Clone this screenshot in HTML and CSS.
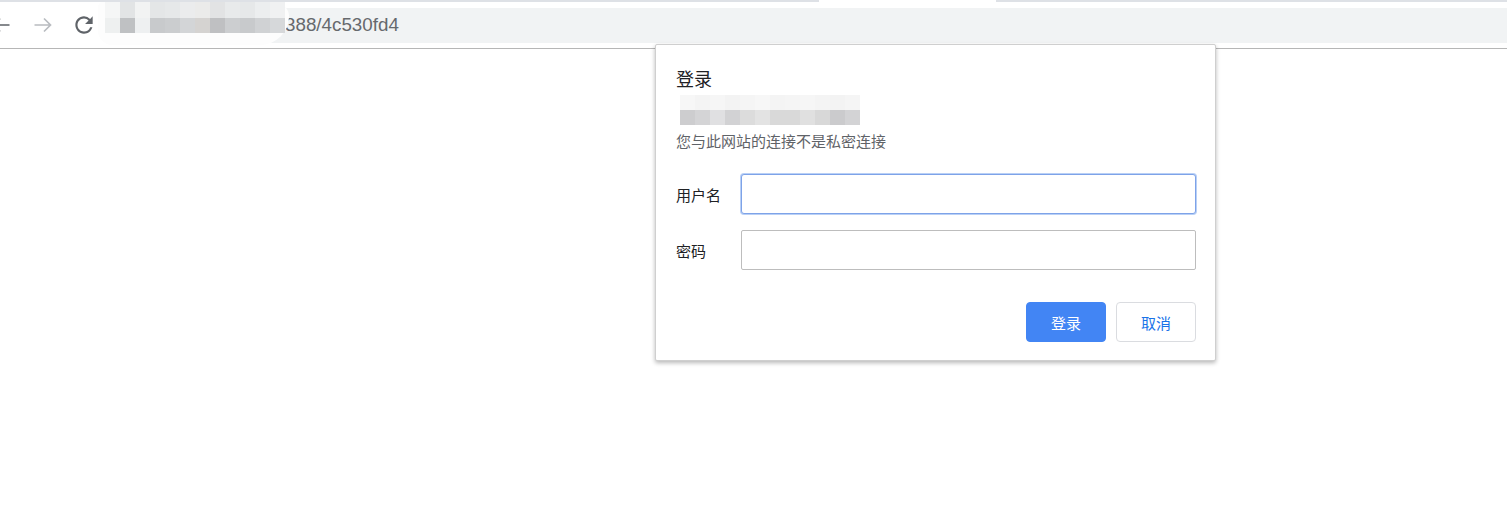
FILE: index.html
```html
<!DOCTYPE html>
<html>
<head>
  <title>登录</title>
  <link rel="stylesheet" href="styles.css">
</head>
<body>
  <div class="tabstrip">
    <div class="tab-line"></div>
    <div class="tab-gap"></div>
    <div class="tab-line grow"></div>
  </div>

  <div class="toolbar">
    <svg class="nav-icon back" viewBox="0 0 24 24"><path d="M20.5 12H4.5M11 5.5l-6.5 6.5 6.5 6.5"/></svg>
    <svg class="nav-icon forward" viewBox="0 0 24 24"><path d="M3.5 12h16M13 5.5l6.5 6.5-6.5 6.5"/></svg>
    <svg class="nav-icon reload" viewBox="0 0 24 24"><path class="fill" d="M17.65 6.35A7.958 7.958 0 0 0 12 4c-4.42 0-7.99 3.58-7.99 8s3.57 8 7.99 8c3.73 0 6.84-2.55 7.73-6h-2.08A5.99 5.99 0 0 1 12 18c-3.310 0-6-2.690-6-6s2.690-6 6-6c1.660 0 3.140.690 4.220 1.780L13 11h7V4l-2.350 2.350z"/></svg>
    <div class="omnibox">
      <span class="url">388/4c530fd4</span>
    </div>
    <div class="mosaic url-mosaic">
      <div class="mosaic-row top">
        <i style="background:#f5f6f6"></i><i style="background:#e2e4e5"></i><i style="background:#f2f3f3"></i><i style="background:#e4e6e7"></i><i style="background:#e6e8e9"></i><i style="background:#ebeced"></i><i style="background:#ebebea"></i><i style="background:#e2e3e4"></i><i style="background:#e8eaeb"></i><i style="background:#e6e8e9"></i><i style="background:#eceeef"></i><i style="background:#f0f1f2"></i>
      </div>
      <div class="mosaic-row">
        <i style="background:#eef0f0"></i><i style="background:#bfc1c3"></i><i style="background:#eef0f1"></i><i style="background:#c8cacc"></i><i style="background:#cbcdcf"></i><i style="background:#d3d5d7"></i><i style="background:#d5d3d1"></i><i style="background:#bfc0c2"></i><i style="background:#ccced0"></i><i style="background:#c8cacc"></i><i style="background:#d0d2d4"></i><i style="background:#d6d8da"></i>
      </div>
    </div>
  </div>

  <div class="dialog">
    <div class="dialog-title">登录</div>
    <div class="host">
      <div class="mosaic">
        <div class="mosaic-row top">
          <i style="background:#f7f7f7"></i><i style="background:#f4f4f4"></i><i style="background:#f6f6f6"></i><i style="background:#f3f3f3"></i><i style="background:#f5f5f5"></i><i style="background:#f7f7f7"></i><i style="background:#f4f4f4"></i><i style="background:#f5f5f5"></i><i style="background:#f6f6f6"></i><i style="background:#f4f4f4"></i><i style="background:#f3f3f3"></i><i style="background:#f5f5f5"></i>
        </div>
        <div class="mosaic-row">
          <i style="background:#cdcdcf"></i><i style="background:#d4d4d6"></i><i style="background:#e0e0e2"></i><i style="background:#d2d2d4"></i><i style="background:#dcdcdc"></i><i style="background:#e3e3e3"></i><i style="background:#d9d9d9"></i><i style="background:#d9d9d9"></i><i style="background:#e0e0e0"></i><i style="background:#d8d8d8"></i><i style="background:#cbcbcd"></i><i style="background:#d3d3d5"></i>
        </div>
      </div>
    </div>
    <div class="dialog-note">您与此网站的连接不是私密连接</div>

    <form class="login-form">
      <div class="form-row">
        <label class="form-label" for="username">用户名</label>
        <input type="text" id="username" class="input-field focused">
      </div>
      <div class="form-row">
        <label class="form-label" for="password">密码</label>
        <input type="password" id="password" class="input-field">
      </div>
      <div class="form-actions">
        <button type="button" class="button primary">登录</button>
        <button type="button" class="button">取消</button>
      </div>
    </form>
  </div>
</body>
</html>
```

FILE: styles.css
```css
html, body {
  margin: 0;
  padding: 0;
  height: 100%;
}

body {
  position: relative;
  background-color: #fff;
  font-family: "Noto Sans CJK SC", "Liberation Sans", sans-serif;
  overflow: hidden;
}

.tabstrip {
  display: flex;
  height: 2px;
}

.tab-line {
  width: 819px;
  background-color: #dee1e6;
}

.tab-line.grow {
  flex: 1;
}

.tab-gap {
  width: 177px;
  background-color: #fff;
}

.toolbar {
  position: relative;
  display: flex;
  align-items: center;
  height: 46px;
  border-bottom: 1px solid #b6b6b6;
}

.nav-icon {
  width: 24px;
  height: 24px;
  flex-shrink: 0;
  fill: none;
  stroke: #5f6368;
  stroke-width: 1.7;
}

.nav-icon .fill {
  fill: #5f6368;
  stroke: none;
}

.back {
  margin-left: -11px;
}

.forward {
  margin-left: 18px;
  stroke: #b9bcc0;
}

.reload {
  margin-left: 16px;
  width: 26px;
  height: 26px;
}

.omnibox {
  flex: 1;
  height: 35px;
  margin-left: 11px;
  padding-left: 177px;
  display: flex;
  align-items: center;
  background-color: #f1f3f4;
  border-radius: 18px 0 0 18px;
}

.url {
  font-family: "Liberation Sans", sans-serif;
  font-size: 18.8px;
  color: #66696d;
}

.mosaic {
  display: flex;
  flex-direction: column;
}

.url-mosaic {
  position: absolute;
  left: 98px;
  top: 0;
  padding: 0 4px 12px 7px;
  background-color: #fdfdfd;
  border-radius: 10px 30px 60px 30px;
}

.mosaic-row {
  display: flex;
}

.mosaic-row i {
  width: 15px;
  height: 15px;
}

.url-mosaic .mosaic-row.top i {
  height: 16px;
}

.dialog {
  position: absolute;
  left: 655px;
  top: 44px;
  width: 561px;
  box-sizing: border-box;
  padding: 20px 19px 18px 20px;
  background-color: #fff;
  border: 1px solid #cfcfcf;
  border-radius: 2px;
  box-shadow: 0 2px 4px rgba(0, 0, 0, 0.28);
}

.dialog-title {
  font-size: 18px;
  line-height: 26px;
  color: #202124;
}

.host {
  height: 40px;
  padding: 4px 0 0 4px;
  box-sizing: border-box;
}

.dialog-note {
  font-size: 15px;
  line-height: 20px;
  color: #5f6368;
}

.login-form {
  margin: 23px 0 0 0;
}

.form-row {
  display: flex;
  align-items: center;
  margin-bottom: 16px;
}

.form-label {
  width: 65px;
  font-size: 15px;
  color: #202124;
}

.input-field {
  width: 455px;
  height: 40px;
  box-sizing: border-box;
  margin: 0;
  padding: 0 8px;
  border: 1px solid #bdbdbd;
  border-radius: 2px;
  font-size: 15px;
  outline: none;
}

.input-field.focused {
  border-color: #7ea3e8;
  border-radius: 3px;
  box-shadow: 0 0 0 1px #b9d0f6;
}

.form-actions {
  display: flex;
  justify-content: flex-end;
  gap: 10px;
  margin-top: 32px;
}

.button {
  width: 80px;
  height: 40px;
  padding: 0;
  background-color: #fff;
  color: #1a73e8;
  border: 1px solid #dadce0;
  border-radius: 4px;
  font-family: "Noto Sans CJK SC", sans-serif;
  font-size: 15px;
  cursor: pointer;
}

.button.primary {
  background-color: #4285f4;
  border-color: #4285f4;
  color: #fff;
}
```
